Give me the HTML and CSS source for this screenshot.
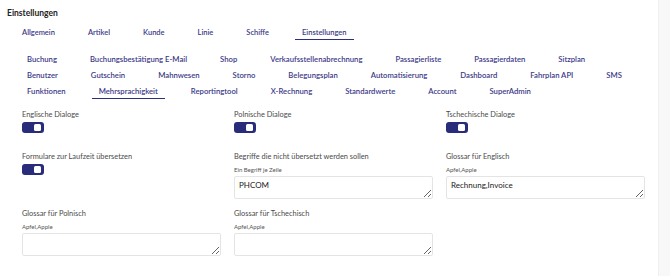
FILE: index.html
```html
<!doctype html>
<html lang="de">
  <head>
    <meta charset="UTF-8" />
    <meta name="viewport" content="width=device-width, initial-scale=1.0" />
    <title>Einstellungen</title>
    <link rel="stylesheet" href="styles.css">
  </head>
  <body>
    <div class="page">
      <h1>Einstellungen</h1>

      <!-- Main tabs -->
      <nav class="tabs main-tabs">
        <a>Allgemein</a>
        <a>Artikel</a>
        <a>Kunde</a>
        <a>Linie</a>
        <a>Schiffe</a>
        <a class="active">Einstellungen</a>
      </nav>

      <!-- Settings sub tabs -->
      <div class="sub-tabs">
        <nav class="tabs">
          <a>Buchung</a>
          <a>Buchungsbestätigung E-Mail</a>
          <a>Shop</a>
          <a>Verkaufsstellenabrechnung</a>
          <a>Passagierliste</a>
          <a>Passagierdaten</a>
          <a>Sitzplan</a>
        </nav>
        <nav class="tabs">
          <a>Benutzer</a>
          <a>Gutschein</a>
          <a>Mahnwesen</a>
          <a>Storno</a>
          <a>Belegungsplan</a>
          <a>Automatisierung</a>
          <a>Dashboard</a>
          <a>Fahrplan API</a>
          <a>SMS</a>
        </nav>
        <nav class="tabs">
          <a>Funktionen</a>
          <a class="active">Mehrsprachigkeit</a>
          <a>Reportingtool</a>
          <a>X-Rechnung</a>
          <a>Standardwerte</a>
          <a>Account</a>
          <a>SuperAdmin</a>
        </nav>
      </div>

      <div class="form-grid">
        <div class="field">
          <label>Englische Dialoge</label>
          <span class="toggle"></span>
        </div>
        <div class="field">
          <label>Polnische Dialoge</label>
          <span class="toggle"></span>
        </div>
        <div class="field">
          <label>Tschechische Dialoge</label>
          <span class="toggle"></span>
        </div>

        <div class="field">
          <label>Formulare zur Laufzeit übersetzen</label>
          <span class="toggle"></span>
        </div>
        <div class="field">
          <label>Begriffe die nicht übersetzt werden sollen</label>
          <small>Ein Begriff je Zeile</small>
          <textarea>PHCOM</textarea>
        </div>
        <div class="field">
          <label>Glossar für Englisch</label>
          <small>Apfel,Apple</small>
          <textarea>Rechnung,Invoice</textarea>
        </div>

        <div class="field">
          <label>Glossar für Polnisch</label>
          <small>Apfel,Apple</small>
          <textarea></textarea>
        </div>
        <div class="field">
          <label>Glossar für Tschechisch</label>
          <small>Apfel,Apple</small>
          <textarea></textarea>
        </div>
      </div>
    </div>
    <div class="side-strip"></div>
  </body>
</html>
```

FILE: styles.css
```css
body {
  font-family: Lato, "Open Sans", sans-serif;
  background-color: #fff;
  color: #333;
  margin: 0;
  display: flex;
  min-height: 100vh;
}
.page {
  flex: 1;
  padding: 8px 0 0 7px;
}
h1 {
  font-size: 8.5px;
  font-weight: 700;
  color: #222;
  margin: 0 0 8px;
  line-height: 10px;
}
.tabs {
  display: flex;
  column-gap: 19px;
}
.tabs a {
  font-size: 7.5px;
  font-weight: 600;
  color: #3b3a88;
  line-height: 10px;
  padding: 2px 7px 2.5px;
  border-bottom: 1.5px solid transparent;
  white-space: nowrap;
}
.tabs a.active {
  border-bottom-color: #2b2e7c;
}
.main-tabs {
  margin-left: 8px;
}
.main-tabs a {
  padding-bottom: 1px;
}
.sub-tabs {
  margin: 11px 0 0 13px;
}
.sub-tabs .tabs {
  padding-top: 0.5px;
}
.sub-tabs a {
  font-size: 7.7px;
}
.form-grid {
  display: grid;
  grid-template-columns: 212px 212px 212px;
  margin: 10.5px 0 0 15px;
  row-gap: 10px;
}
.field label {
  display: block;
  font-size: 7.4px;
  color: #4a4a4a;
  line-height: 10px;
  margin-bottom: 2px;
}
.field small {
  display: block;
  font-size: 6px;
  color: #555;
  line-height: 7px;
  margin: 4.5px 0 2.5px;
}
.toggle {
  display: block;
  position: relative;
  width: 22px;
  height: 11px;
  border-radius: 3px;
  background-color: #292c7a;
  margin-bottom: 9px;
}
.toggle::after {
  content: "";
  position: absolute;
  right: 3px;
  top: 2px;
  width: 7px;
  height: 7px;
  border-radius: 1.5px;
  background-color: #fff;
}
textarea {
  display: block;
  width: 199px;
  height: 23px;
  box-sizing: border-box;
  border: 1px solid #e4e4e4;
  border-radius: 2px;
  padding: 3px 4px;
  font-family: inherit;
  font-size: 8px;
  line-height: 10px;
  color: #222;
  resize: vertical;
}
.side-strip {
  width: 13px;
  background-color: #f8f8f9;
  border-left: 1px solid #efeff1;
}
```
